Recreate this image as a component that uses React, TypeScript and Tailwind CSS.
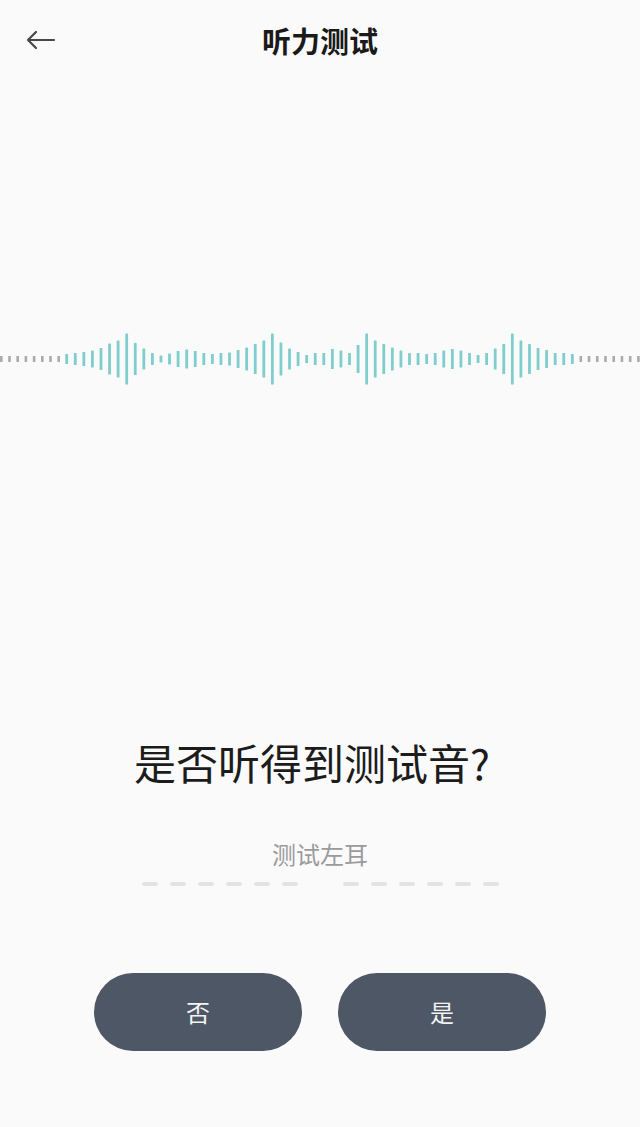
import React from "react";

const CJK = { fontFamily: '"Noto Sans CJK SC", "Noto Sans", sans-serif' };

// heights of the teal bars, left to right
const BARS = [
  10, 12, 14, 17, 22, 31, 37, 51, 32, 21, 12, 7, 11, 16, 19, 16, 12, 10, 12, 13,
  18, 23, 30, 37, 51, 33, 21, 14, 8, 12, 12, 20, 17, 12, 28, 51, 37, 30, 23, 17,
  12, 12, 10, 12, 17, 20, 17, 12, 8, 12, 21, 30, 51, 37, 30, 22, 18, 12, 12, 10,
];

function Waveform() {
  const cy = 30;
  return (
    <svg width="640" height="60" viewBox="0 0 640 60" className="block">
      {Array.from({ length: 8 }, (_, i) => (
        <rect key={"l" + i} x={0 + i * 8.2} y={cy - 3} width="2.6" height="6" fill="#ababab" />
      ))}
      {BARS.map((h, i) => (
        <rect key={i} x={65.3 + i * 8.57} y={cy - h / 2} width="2.8" height={h} rx="0.6" fill="#7fcdcd" />
      ))}
      {Array.from({ length: 8 }, (_, i) => (
        <rect key={"r" + i} x={579.5 + i * 8.23} y={cy - 3} width="2.6" height="6" fill="#ababab" />
      ))}
    </svg>
  );
}

function Dashes() {
  return (
    <div className="flex gap-3">
      {Array.from({ length: 6 }, (_, i) => (
        <div key={i} className="h-[4px] w-4 rounded-full bg-[#e3e3e3]" />
      ))}
    </div>
  );
}

export default function App() {
  return (
    <div className="flex h-[1127px] w-[640px] flex-col bg-[#fafafa]" style={CJK}>
      {/* header */}
      <div className="flex h-[80px] items-center px-[26px]">
        <svg width="30" height="20" viewBox="0 0 30 20" fill="none" stroke="#474747" strokeWidth="2.2" strokeLinecap="round" strokeLinejoin="round">
          <path d="M2 10h26M10 2L2 10l8 8" />
        </svg>
        <h1 className="flex-1 text-center text-[29px] font-bold leading-none text-[#1a1a1a]">听力测试</h1>
        <div className="w-[30px]" />
      </div>

      {/* waveform */}
      <div className="mt-[249px]">
        <Waveform />
      </div>

      {/* question */}
      <p className="mt-[345px] pr-4 text-center text-[42px] leading-[56px] text-[#1c1c1c]">是否听得到测试音?</p>
      <p className="mt-[48px] text-center text-[24px] leading-[32px] text-[#9b9b9b]">测试左耳</p>

      <div className="mt-[12px] flex justify-center gap-[45px]">
        <Dashes />
        <Dashes />
      </div>

      {/* answers */}
      <div className="mt-[87px] flex justify-center gap-9">
        <button className="h-[78px] w-[208px] rounded-full bg-[#4e5765] text-[24px] text-[#f3f3f3]">否</button>
        <button className="h-[78px] w-[208px] rounded-full bg-[#4e5765] text-[24px] text-[#f3f3f3]">是</button>
      </div>
    </div>
  );
}
